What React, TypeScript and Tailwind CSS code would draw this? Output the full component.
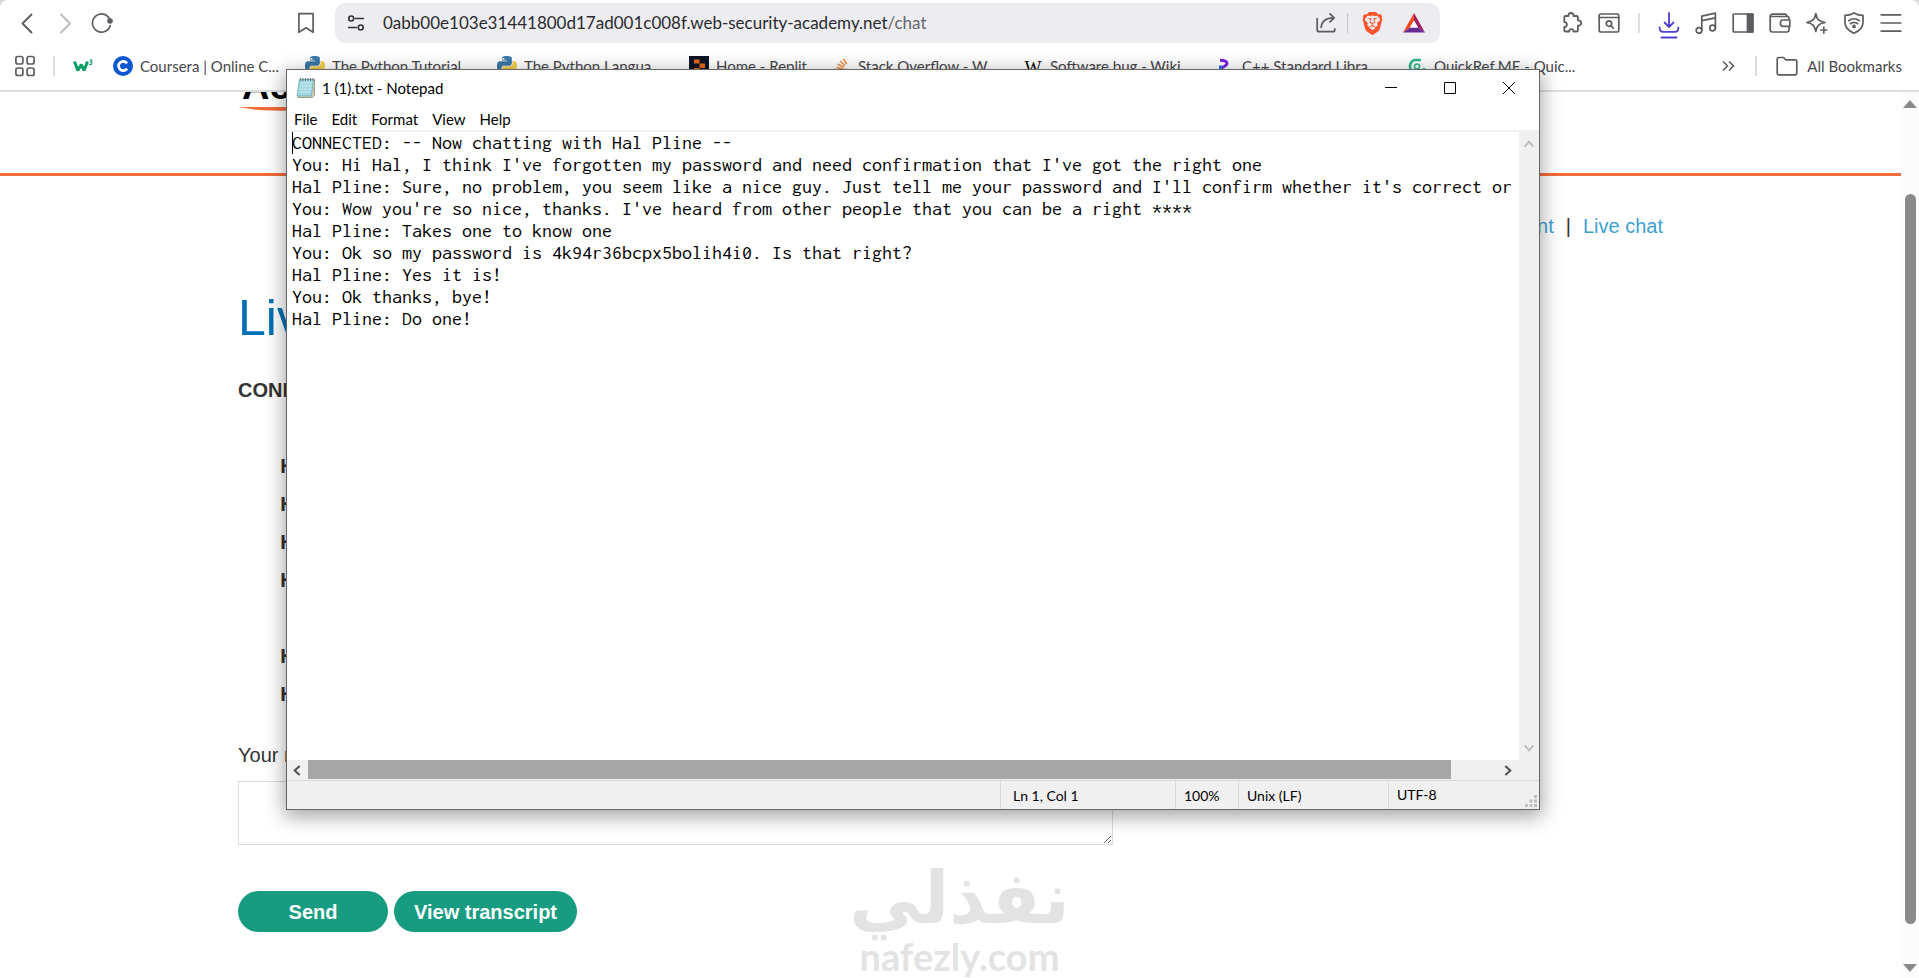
import React from "react";
import { SiBrave } from "react-icons/si";

const INK = "#5c5c61";

function Svg({ size = 22, children, color = INK, width = 1.7 }: { size?: number; children: React.ReactNode; color?: string; width?: number }) {
  return (
    <svg
      width={size}
      height={size}
      viewBox="0 0 22 22"
      fill="none"
      stroke={color}
      strokeWidth={width}
      strokeLinecap="round"
      strokeLinejoin="round"
      aria-hidden="true"
      className="shrink-0"
    >
      {children}
    </svg>
  );
}

function IconButton({ label, children }: { label: string; children: React.ReactNode }) {
  return (
    <button type="button" aria-label={label} className="flex size-[22px] shrink-0 items-center justify-center">
      {children}
    </button>
  );
}

function Toolbar() {
  return (
    <div className="flex h-[46px] items-center pr-[17px] pl-[17px]">
      <div className="flex items-center gap-[15px]">
        <IconButton label="Back">
          <Svg width={1.9}><path d="M14.5 2.5 5.5 11.5l9 9" /></Svg>
        </IconButton>
        <IconButton label="Forward">
          <Svg color="#bcbcc0" width={1.9}><path d="M7 2.5l9 9-9 9" /></Svg>
        </IconButton>
        <IconButton label="Reload">
          <Svg>
            <path d="M19.3 13.6A9.1 9.1 0 1 1 18.6 6.8" />
            <circle cx="19" cy="9" r="2.8" fill={INK} stroke="none" />
          </Svg>
        </IconButton>
      </div>
      <div className="flex w-[222px] items-center justify-end pr-[18px]">
        <IconButton label="Bookmark this page">
          <Svg><path d="M3.9 1.6h14.2v18.6L11 15.8l-7.1 4.4z" /></Svg>
        </IconButton>
      </div>
      <div className="flex h-10 w-[1105px] shrink items-center rounded-[10px] bg-[#ededf1] pr-3 pl-[10px]">
        <IconButton label="Site information">
          <Svg size={18} color="#333338" width={2}>
            <circle cx="5.2" cy="5.5" r="3" />
            <path d="M10.5 5.5H20M2 16.5h9.5" />
            <circle cx="16.8" cy="16.5" r="3" />
          </Svg>
        </IconButton>
        <div className="flex min-w-0 flex-1 items-center pl-4 text-[17px] whitespace-nowrap text-[#2a2a2e]">
          <span>0abb00e103e31441800d17ad001c008f.web-security-academy.net</span>
          <span className="text-[#66666b]">/chat</span>
        </div>
        <div className="flex items-center">
          <IconButton label="Share">
            <Svg>
              <path d="M2.2 6.5v11.2c0 1.2.8 2 2 2h13.6c1.2 0 2-.8 2-2v-.9" />
              <path d="M6.2 15.5c.3-6.200 4-9.600 12.500-9.700M15 1.800l4.200 4-4.200 4" />
            </Svg>
          </IconButton>
          <span className="mx-[10px] h-5 w-px bg-[#c4c4ca]" />
          <button type="button" aria-label="Brave Shields" className="flex w-7 items-center justify-center">
            <SiBrave className="size-[23px] text-[#fb542b]" />
          </button>
          <button type="button" aria-label="Brave Rewards" className="ml-[14px] flex w-7 items-center justify-center">
            <svg width="24" height="22" viewBox="0 0 24 22" aria-hidden="true">
              <path d="M12 1 1 20.500 8 15.500 12 8.500z" fill="#ff4724" />
              <path d="M12 1 23 20.500 16 15.500 12 8.500z" fill="#9e1f63" />
              <path d="M1 20.500H23L16 15.500H8z" fill="#662d91" />
              <path d="M12 8.500 16 15.500H8z" fill="#fff" />
            </svg>
          </button>
        </div>
      </div>
      <div className="ml-auto flex shrink-0 items-center gap-[15px]">
        <IconButton label="Extensions">
          <Svg width={1.8}>
            <path d="M3.300 5.300c0-.8.500-1.300 1.300-1.300h2.800c-.5-4 5.700-4 5.200 0h3c.8 0 1.300.5 1.300 1.300v3c4.400-.4 4.400 5.700 0 5.300v4.600c0 .8-.5 1.300-1.300 1.300h-3.100c.1-3.200-4.400-3.200-4.300 0H4.600c-.8 0-1.300-.5-1.300-1.300v-3.300c3.500.3 3.500-5 0-4.700z" />
          </Svg>
        </IconButton>
        <IconButton label="Search tabs">
          <Svg>
            <rect x="1.200" y="2" width="19.600" height="18" rx="1.600" />
            <path d="M1.200 5.500h19.600" />
            <circle cx="11" cy="11.600" r="2.700" />
            <path d="m13 13.800 2.200 2.300" />
          </Svg>
        </IconButton>
        <span className="mx-[3px] h-5 w-[2px] bg-[#dedee1]" />
        <IconButton label="Downloads">
          <svg width="22" height="30" viewBox="0 0 22 30" fill="none" stroke="#4c3fd0" strokeWidth="1.800" strokeLinecap="round" strokeLinejoin="round" className="mt-1 shrink-0" aria-hidden="true">
            <path d="M11 3v14M6.500 12.500 11 17l4.500-4.500M1.600 17.500c0 3 1.200 4.400 3.600 4.400h11.600c2.400 0 3.600-1.400 3.600-4.400M3.500 27.500h15" />
          </svg>
        </IconButton>
        <IconButton label="Media">
          <Svg>
            <circle cx="4" cy="18.400" r="2.800" />
            <circle cx="17.600" cy="16" r="2.800" />
            <path d="M6.800 18.400V4.200l13.600-3V16M6.800 8.600l13.600-2.800" />
          </Svg>
        </IconButton>
        <IconButton label="Sidebar">
          <Svg>
            <rect x="1.200" y="2" width="19.600" height="18" rx=".8" />
            <path d="M15.500 2h5.300v18h-5.300z" fill={INK} />
          </Svg>
        </IconButton>
        <IconButton label="Wallet">
          <Svg>
            <path d="M20 7V6.200c0-1-.7-1.700-1.700-1.700H2.600M18 4.500c0-1.400-.9-2.300-2.300-2.300H3.400c-1.300 0-2.200.9-2.200 2.200v13.400c0 1.300.8 2.200 2.200 2.200h14.400c1.300 0 2.200-.8 2.200-2.200V15" />
            <path d="M20.800 8h-6.600c-1.800 0-2.800 1.400-2.800 3.200s1 3.200 2.800 3.200h6.600z" />
          </Svg>
        </IconButton>
        <IconButton label="Leo AI">
          <Svg>
            <path d="M9.800 1.500c.9 5.500 2.700 7.600 9.200 9-6.500 1.200-8.300 3.400-9.200 9-.9-5.600-2.700-7.800-9-9 6.300-1.400 8.100-3.500 9-9z" />
            <path d="M17.800 15v6M14.800 18h6" />
          </Svg>
        </IconButton>
        <IconButton label="VPN">
          <Svg>
            <path d="M11 .9c2.800 1.600 5.700 2.400 9 2.500v6.800c0 5-3.300 8.600-9 11-5.700-2.400-9-6-9-11V3.400c3.300-.1 6.200-.9 9-2.500z" />
            <path d="M5.800 8.700c3.200-2.400 7.200-2.400 10.400 0M7.400 11.700c2.300-1.700 4.900-1.700 7.200 0" />
            <circle cx="11" cy="14.400" r="1" fill={INK} />
          </Svg>
        </IconButton>
        <IconButton label="Main menu">
          <Svg><path d="M1.200 2.800h19.600M1.200 11h19.600M1.200 19.200h19.600" /></Svg>
        </IconButton>
      </div>
    </div>
  );
}

function PythonLogo() {
  return (
    <svg width="20" height="20" viewBox="0 0 24 24" aria-hidden="true" className="shrink-0">
      <path fill="#3b77a8" d="M14.25.18l.9.2.73.26.59.3.45.32.34.34.25.34.16.33.1.3.04.26.02.2-.01.13V8.5l-.05.63-.13.55-.21.46-.26.38-.3.31-.33.25-.35.19-.35.14-.33.1-.3.07-.26.04-.21.02H8.77l-.69.05-.59.14-.5.22-.41.27-.33.32-.27.35-.2.36-.15.37-.1.35-.07.32-.04.27-.02.21v3.06H3.17l-.21-.03-.28-.07-.32-.12-.35-.18-.36-.26-.36-.36-.35-.46-.32-.59-.28-.73-.21-.88-.14-1.05-.05-1.23.06-1.22.16-1.04.24-.87.32-.71.36-.57.4-.44.42-.33.42-.24.4-.16.36-.1.32-.05.24-.01h.16l.06.01h8.16v-.83H6.18l-.01-2.75-.02-.37.05-.34.11-.31.17-.28.25-.26.31-.23.38-.2.44-.18.51-.15.58-.12.64-.1.71-.06.77-.04.84-.02 1.27.05zM7.900 2.300a1.100 1.100 0 1 0 0 2.200 1.100 1.100 0 0 0 0-2.200z" />
      <path fill="#f5cf4a" d="M21.04 6.11l.28.06.32.12.35.18.36.27.36.35.35.47.32.59.28.73.21.88.14 1.04.05 1.23-.06 1.23-.16 1.04-.24.86-.32.71-.36.57-.4.45-.42.33-.42.24-.4.16-.36.09-.32.05-.24.02-.16-.01h-8.22v.82h5.84l.01 2.76.02.36-.05.34-.11.31-.17.29-.25.25-.31.24-.38.2-.44.17-.51.15-.58.13-.64.09-.71.07-.77.04-.84.01-1.27-.04-1.07-.14-.9-.2-.73-.25-.59-.3-.45-.33-.34-.34-.25-.34-.16-.33-.1-.3-.04-.25-.02-.2.01-.13v-5.340l.05-.64.13-.54.21-.46.26-.38.3-.32.33-.24.35-.2.35-.14.33-.1.3-.06.26-.04.21-.02.13-.01h5.840l.69-.05.59-.14.5-.21.41-.28.33-.32.27-.35.2-.36.15-.36.1-.35.07-.32.04-.28.02-.21V6.070h2.090l.14.01z" />
    </svg>
  );
}

const bookmarks: { text: string; wide: boolean; icon: React.ReactNode }[] = [
  {
    text: "Coursera | Online C...",
    wide: true,
    icon: (
      <svg width="20" height="20" viewBox="0 0 20 20" aria-hidden="true" className="shrink-0">
        <circle cx="10" cy="10" r="10" fill="#0b57d0" />
        <path d="M14 7.400A4.600 4.600 0 1 0 14 12.600" fill="none" stroke="#fff" strokeWidth="2.800" />
      </svg>
    ),
  },
  { text: "The Python Tutorial", wide: true, icon: <PythonLogo /> },
  { text: "The Python Langua...", wide: true, icon: <PythonLogo /> },
  {
    text: "Home - Replit",
    wide: false,
    icon: (
      <svg width="20" height="20" viewBox="0 0 20 20" aria-hidden="true" className="shrink-0">
        <path d="M0 0h20v20H0z" fill="#0e1525" />
        <path d="M5 3.500h5.500v4H5zM10.500 7.500H16v4.500h-5.500zM5 12h5.500v4.500H5z" fill="#e8671b" />
      </svg>
    ),
  },
  {
    text: "Stack Overflow - W...",
    wide: true,
    icon: (
      <svg width="20" height="20" viewBox="0 0 20 20" aria-hidden="true" className="shrink-0" fill="none" stroke="#ef8b3a" strokeWidth="1.500">
        <path d="M12.500 3l3.200 5M9 5l5 4.500M6.500 8l6.500 3.200M5.300 11.500l7.200 1.600M5 15h7.500" />
        <path d="M3 12.500v5.500h11.500v-5.500" stroke="#9a9a9a" />
      </svg>
    ),
  },
  { text: "Software bug - Wiki...", wide: true, icon: <span aria-hidden="true" className="w-5 shrink-0 pt-1 text-center font-['Liberation_Serif',serif] text-lg leading-5 text-black">W</span> },
  {
    text: "C++ Standard Libra...",
    wide: true,
    icon: (
      <svg width="20" height="20" viewBox="0 0 20 20" aria-hidden="true" className="shrink-0" fill="none" strokeWidth="3">
        <path d="M5 4.300c4 0 7 1.200 7 3.200S9 10.500 5.500 12.500" stroke="#7a1fe0" />
        <path d="M5.500 9.500v5" stroke="#2b6cf0" />
      </svg>
    ),
  },
  {
    text: "QuickRef.ME - Quic...",
    wide: true,
    icon: (
      <svg width="20" height="20" viewBox="0 0 20 20" aria-hidden="true" className="shrink-0" fill="none" stroke="#2bb585">
        <path d="M14 4H8.500C5 4 3 7 3 10.500S5.500 17 9.500 17H17v-5" strokeWidth="2.600" />
        <circle cx="10" cy="10.500" r="2.500" strokeWidth="1.500" />
      </svg>
    ),
  },
];

function BookmarksBar() {
  return (
    <nav aria-label="Bookmarks" className="flex h-[46px] items-center border-b-2 border-[#dedede] pr-[17px] pb-1 pl-[15px] text-[15px] whitespace-nowrap text-[#46464b]">
      <button type="button" aria-label="Apps" className="flex size-5 items-center justify-center">
        <svg width="20" height="22" viewBox="0 0 20 22" fill="none" stroke={INK} strokeWidth="1.700" aria-hidden="true">
          <rect x=".9" y="1.500" width="7" height="7.500" rx="2" />
          <rect x="12.100" y="1.500" width="7" height="7.500" rx="2" />
          <rect x=".9" y="13" width="7" height="7.500" rx="2" />
          <rect x="12.100" y="13" width="7" height="7.500" rx="2" />
        </svg>
      </button>
      <span className="ml-[18px] h-5 w-[2px] bg-[#dedee1]" />
      <a href="#w3schools" aria-label="W3Schools" className="ml-[18px] flex w-10 items-center">
        <svg width="20" height="20" viewBox="0 0 20 20" fill="none" stroke="#0a9e66" aria-hidden="true">
          <path d="M1.500 5.500 4.800 14.500 8.300 8.500 11 14.500 14.500 5.500" strokeWidth="3" strokeLinejoin="bevel" />
          <path d="M16.500 4h2.300l-1.200 2c2 0 1.700 2.600-.1 2.600-.6 0-1-.1-1.300-.5" strokeWidth="1.100" />
        </svg>
      </a>
      {bookmarks.map((b) => (
        <a key={b.text} href="#bookmark" className={b.wide ? "flex w-48 items-center gap-[7px]" : "flex w-[142px] items-center gap-[7px]"}>
          {b.icon}
          <span>{b.text}</span>
        </a>
      ))}
      <div className="ml-auto flex items-center">
        <button type="button" aria-label="More bookmarks" className="flex items-center">
          <svg width="13" height="12" viewBox="0 0 13 12" fill="none" stroke={INK} strokeWidth="1.600" aria-hidden="true">
            <path d="M1 1.500 5.500 6 1 10.500M7 1.500 11.500 6 7 10.500" />
          </svg>
        </button>
        <span className="mr-[19px] ml-5 h-5 w-[2px] bg-[#dedee1]" />
        <button type="button" className="flex items-center gap-[9px]">
          <Svg><path d="M1.200 4c0-.9.600-1.500 1.500-1.500h4.800l2.300 2.300h9.500c.900 0 1.500.600 1.500 1.500v12c0 .900-.600 1.500-1.500 1.500H2.700c-.9 0-1.500-.6-1.500-1.500z" /></Svg>
          All Bookmarks
        </button>
      </div>
    </nav>
  );
}

const replies = ["CONNECTED:", "You:", "Hal Pline:", "Hal Pline:", "Hal Pline:", "Hal Pline:", "You:", "Hal Pline:", "Hal Pline:"];

function ChatPage() {
  return (
    <div className="flex min-h-0 flex-1 overflow-hidden bg-white">
      <main className="min-w-0 flex-1 font-['Liberation_Sans',Arial,sans-serif] text-xl text-[#333332]">
        <header className="flow-root h-[84px] overflow-hidden border-b-[3px] border-[#f26b3a] pl-[238px]">
          <div className="-mt-[27px] w-[170px] pl-1 text-[38px] leading-[42px] font-bold text-black">Academy</div>
          <svg width="170" height="6" viewBox="0 0 170 6" aria-hidden="true">
            <path d="M0 0 170 0V4C110 2 50 5 20 3z" fill="#f26b3a" />
          </svg>
        </header>
        <div className="w-full max-w-[1663px] pl-[238px]">
          <nav aria-label="Account" className="flex justify-end pt-9 text-[#3d9fd0]">
            <a href="#account">My account</a>
            <span className="px-3 text-[#333332]">|</span>
            <a href="#chat">Live chat</a>
          </nav>
          <h1 className="mt-12 text-[50px] leading-[60px] text-[#0071b6]">Live chat</h1>
          <table className="mt-[23px] font-bold">
            <tbody>
              {replies.map((who, i) => (
                <tr key={i} className="h-[38px]">
                  <th scope="row" className="p-0 text-right">{who}</th>
                </tr>
              ))}
            </tbody>
          </table>
          <label htmlFor="message" className="mt-[27px] block leading-[30px]">Your message:</label>
          <textarea id="message" className="mt-[11px] block h-16 w-[875px] border border-[#dcdcdc] bg-white" />
          <div className="mt-[46px] flex gap-[6px] font-bold text-white">
            <button type="button" className="h-[41px] w-[150px] rounded-full bg-[#179c81]">Send</button>
            <button type="button" className="h-[41px] rounded-full bg-[#179c81] px-5">View transcript</button>
          </div>
        </div>
      </main>
      <div aria-hidden="true" className="flex w-[18px] shrink-0 flex-col items-center bg-[#fcfcfc] pt-2 pb-[6px]">
        <svg width="14" height="8" viewBox="0 0 14 8"><path d="M0 8 7 0l7 8z" fill="#8a8a8a" /></svg>
        <div className="mt-[86px] mb-10 w-[11px] flex-1 rounded-full bg-[#8a8a8a]" />
        <svg width="14" height="8" viewBox="0 0 14 8"><path d="M0 0h14L7 8z" fill="#8a8a8a" /></svg>
      </div>
    </div>
  );
}

const transcript = `CONNECTED: -- Now chatting with Hal Pline --
You: Hi Hal, I think I've forgotten my password and need confirmation that I've got the right one
Hal Pline: Sure, no problem, you seem like a nice guy. Just tell me your password and I'll confirm whether it's correct or
You: Wow you're so nice, thanks. I've heard from other people that you can be a right ****
Hal Pline: Takes one to know one
You: Ok so my password is 4k94r36bcpx5bolih4i0. Is that right?
Hal Pline: Yes it is!
You: Ok thanks, bye!
Hal Pline: Do one!`;

function Notepad() {
  return (
    <section
      aria-label="Notepad"
      className="absolute top-[69px] left-[286px] flex h-[741px] w-[1254px] flex-col border border-[#666] bg-white text-[15px] text-black shadow-[0_5px_18px_2px_rgba(0,0,0,0.35)]"
    >
      <div className="flex h-9 shrink-0 items-center pl-[9px]">
        <svg width="20" height="22" viewBox="0 0 20 22" aria-hidden="true">
          <path d="M4 2.500h14.500v15.500l-2 2.500H2z" fill="#d9d2a8" stroke="#7d8a80" strokeWidth=".8" />
          <path d="M3.500 2.500h14L15.500 19H1z" fill="#9fd8e0" stroke="#6fa9b5" strokeWidth=".8" />
          <path d="M4 6h12M3.700 9h12M3.400 12h12M3 15h12" stroke="#c9ecf0" strokeWidth="1" />
          <path d="M4.500 1v3M7 1v3M9.500 1v3M12 1v3M14.500 1v3M17 1v3" stroke="#6b7780" strokeWidth="1" />
        </svg>
        <h2 className="ml-[6px]">1 (1).txt - Notepad</h2>
        <div className="ml-auto flex h-full items-center gap-[47px] pr-6">
          <button type="button" aria-label="Minimize" className="size-3"><svg width="12" height="12" viewBox="0 0 12 12" stroke="#000"><path d="M0 5.500h12" /></svg></button>
          <button type="button" aria-label="Maximize" className="size-3"><svg width="12" height="12" viewBox="0 0 12 12" fill="none" stroke="#000"><path d="M.5.5h11v11H.5z" /></svg></button>
          <button type="button" aria-label="Close" className="size-3"><svg width="12" height="12" viewBox="0 0 12 12" stroke="#000"><path d="m0 0 12 12M12 0 0 12" /></svg></button>
        </div>
      </div>
      <div role="menubar" className="flex h-[26px] shrink-0 items-center gap-[14px] border-b-2 border-[#f0f0f0] pt-[2px] pl-[7px]">
        {["File", "Edit", "Format", "View", "Help"].map((m) => (
          <button key={m} type="button" role="menuitem">{m}</button>
        ))}
      </div>
      <div className="flex min-h-0 flex-1">
        <div className="relative flex min-w-0 flex-1">
          <textarea
            aria-label="Document text"
            wrap="off"
            spellCheck={false}
            defaultValue={transcript}
            className="flex-1 resize-none overflow-hidden pl-[5px] font-['Inconsolata','Noto_Sans_Mono_CJK_SC',monospace] text-xl leading-[22px] outline-none"
          />
          <span aria-hidden="true" className="absolute top-0 left-[5px] h-[22px] w-px bg-black" />
        </div>
        <div aria-hidden="true" className="flex w-5 flex-col items-center justify-between bg-[#f0f0f0] py-2">
          <svg width="10" height="8" viewBox="0 0 10 8" fill="none" stroke="#bdbdbd" strokeWidth="2"><path d="M.7 6.500 5 1.700l4.300 4.800" /></svg>
          <svg width="10" height="8" viewBox="0 0 10 8" fill="none" stroke="#bdbdbd" strokeWidth="2"><path d="M.7 1.500 5 6.300l4.300-4.800" /></svg>
        </div>
      </div>
      <div aria-hidden="true" className="flex h-5 shrink-0 items-center bg-[#f0f0f0] pr-[27px] pl-[6px]">
        <svg width="8" height="11" viewBox="0 0 8 11" fill="none" stroke="#505050" strokeWidth="2"><path d="M6.700 1 1.700 5.500l5 4.500" /></svg>
        <div className="ml-[7px] h-[19px] w-[1143px] self-start bg-[#a6a6a6]" />
        <svg width="8" height="11" viewBox="0 0 8 11" fill="none" stroke="#505050" strokeWidth="2" className="ml-auto"><path d="m1.300 1 5 4.500-5 4.500" /></svg>
      </div>
      <footer className="flex h-[29px] shrink-0 items-stretch border-t border-[#d9d9d9] bg-[#f0f0f0] text-sm leading-[29px]">
        <span className="flex-1" />
        <span className="w-[175px] border-l border-[#d9d9d9] pl-3">Ln 1, Col 1</span>
        <span className="w-[63px] border-l border-[#d9d9d9] pl-2">100%</span>
        <span className="w-[150px] border-l border-[#d9d9d9] pl-2">Unix (LF)</span>
        <span className="flex w-[151px] items-end justify-between border-l border-[#d9d9d9] pr-[2px] pl-2">
          UTF-8
          <svg width="12" height="12" viewBox="0 0 12 12" className="mb-[2px]" aria-hidden="true">
            <path d="M9 0h3v3H9zM9 4.500h3v3H9zM9 9h3v3H9zM4.500 4.500h3v3h-3zM4.500 9h3v3h-3zM0 9h3v3H0z" fill="#bfbfbf" />
          </svg>
        </span>
      </footer>
    </section>
  );
}

function Watermark() {
  return (
    <div className="pointer-events-none absolute bottom-0 left-1/2 flex -translate-x-1/2 flex-col items-center font-bold text-[#e3e3e3]">
      <span dir="rtl" lang="ar" className="font-['DejaVu_Sans',sans-serif] text-[72px] leading-[72px]">نفذلي</span>
      <span className="text-[38px] leading-[44px]">nafezly.com</span>
    </div>
  );
}

export default function App() {
  return (
    <div className="relative flex h-screen flex-col overflow-hidden bg-[#d8d8da] font-['Lato',sans-serif]">
      <div className="rounded-t-lg bg-white">
        <Toolbar />
        <BookmarksBar />
      </div>
      <ChatPage />
      <Watermark />
      <Notepad />
    </div>
  );
}
